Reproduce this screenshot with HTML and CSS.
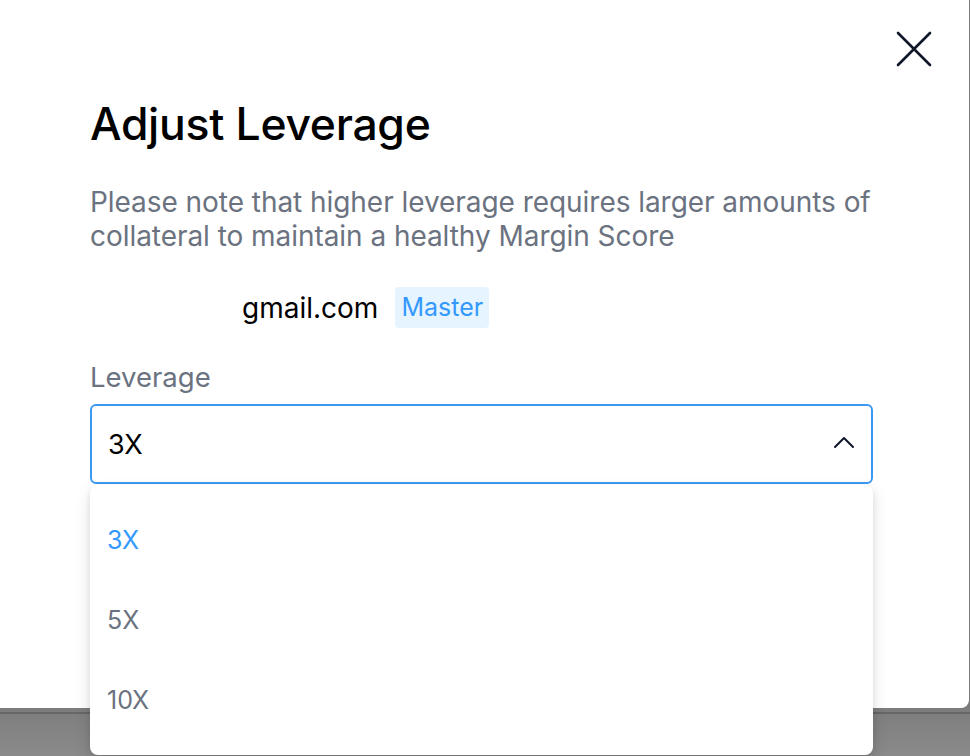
FILE: index.html
```html
<!DOCTYPE html>
<html lang="en">
<head>
    <meta charset="UTF-8">
    <meta name="viewport" content="width=device-width, initial-scale=1.0">
    <title>Adjust Leverage</title>
    <link rel="stylesheet" href="styles.css">
</head>
<body>
    <div class="modal">
        <button class="close" aria-label="Close">
            <svg width="36" height="36" viewBox="0 0 36 36">
                <path d="M2 2 L34 34 M34 2 L2 34" stroke="#0f1729" stroke-width="2.6" fill="none" stroke-linecap="round"/>
            </svg>
        </button>

        <div class="content">
            <h1 class="title">Adjust Leverage</h1>
            <p class="note">Please note that higher leverage requires larger amounts of collateral to maintain a healthy Margin Score</p>

            <div class="account">
                <span class="email"><span class="hidden-name"></span>gmail.com</span>
                <span class="badge">Master</span>
            </div>

            <div class="label">Leverage</div>
            <div class="select-wrap">
                <div class="select">
                    <span>3X</span>
                    <svg width="22" height="14" viewBox="0 0 22 14">
                        <path d="M2 12 L11 3 L20 12" stroke="#0f1729" stroke-width="2" fill="none" stroke-linecap="round" stroke-linejoin="round"/>
                    </svg>
                </div>
                <ul class="options">
                    <li class="active">3X</li>
                    <li>5X</li>
                    <li>10X</li>
                </ul>
            </div>
        </div>
    </div>
    <div class="backdrop"></div>
</body>
</html>
```

FILE: styles.css
```css
body {
    margin: 0;
    width: 970px;
    height: 756px;
    overflow: hidden;
    font-family: Inter, 'Noto Sans', sans-serif;
    background: #7a7a7a;
}

.modal {
    position: relative;
    width: 969px;
    height: 708px;
    background: #ffffff;
    border-bottom-right-radius: 8px;
}

.close {
    position: absolute;
    top: 31px;
    right: 37px;
    padding: 0;
    border: none;
    background: none;
    cursor: pointer;
}

.close svg {
    display: block;
}

.content {
    width: 783px;
    padding: 98px 0 0 90px;
}

.title {
    margin: 0;
    font-size: 44.5px;
    font-weight: 500;
    line-height: 52px;
    color: #000000;
    letter-spacing: -0.3px;
}

.note {
    margin: 35px 0 0;
    font-size: 28px;
    line-height: 34px;
    color: #6b7280;
    letter-spacing: -0.05px;
}

.account {
    display: flex;
    align-items: center;
    gap: 17px;
    margin-top: 34px;
    height: 41px;
}

.email {
    display: flex;
    font-size: 28px;
    color: #000000;
}

.hidden-name {
    width: 152px;
}

.badge {
    padding: 5px 6px;
    background: #e6f4ff;
    color: #3399ff;
    border-radius: 4px;
    font-size: 25px;
    line-height: 31px;
}

.label {
    margin-top: 32px;
    font-size: 27.5px;
    line-height: 34px;
    color: #6b7280;
}

.select-wrap {
    position: relative;
    margin-top: 10px;
}

.select {
    display: flex;
    justify-content: space-between;
    align-items: center;
    height: 76px;
    padding: 0 16px;
    border: 2px solid #3b99f2;
    border-radius: 6px;
    font-size: 27px;
    color: #000000;
}

.select svg {
    display: block;
    margin-top: -4px;
}

.options {
    position: absolute;
    top: 81px;
    left: 0;
    right: 0;
    height: 270px;
    margin: 0;
    padding: 15px 0 0;
    list-style: none;
    background: #ffffff;
    border-radius: 8px;
    box-shadow: 0 6px 16px rgba(0, 0, 0, 0.12), 0 3px 6px rgba(0, 0, 0, 0.08);
    box-sizing: border-box;
}

.options li {
    height: 80px;
    line-height: 80px;
    padding: 0 17px;
    font-size: 25px;
    color: #6b7280;
}

.options li.active {
    color: #3399ff;
}

.backdrop {
    height: 48px;
    background: linear-gradient(180deg, #7d7d7d 0, #7d7d7d 4px, #666666 4px, #666666 6px, #7f7f7f 6px, #8a8a8a 48px);
}
```
